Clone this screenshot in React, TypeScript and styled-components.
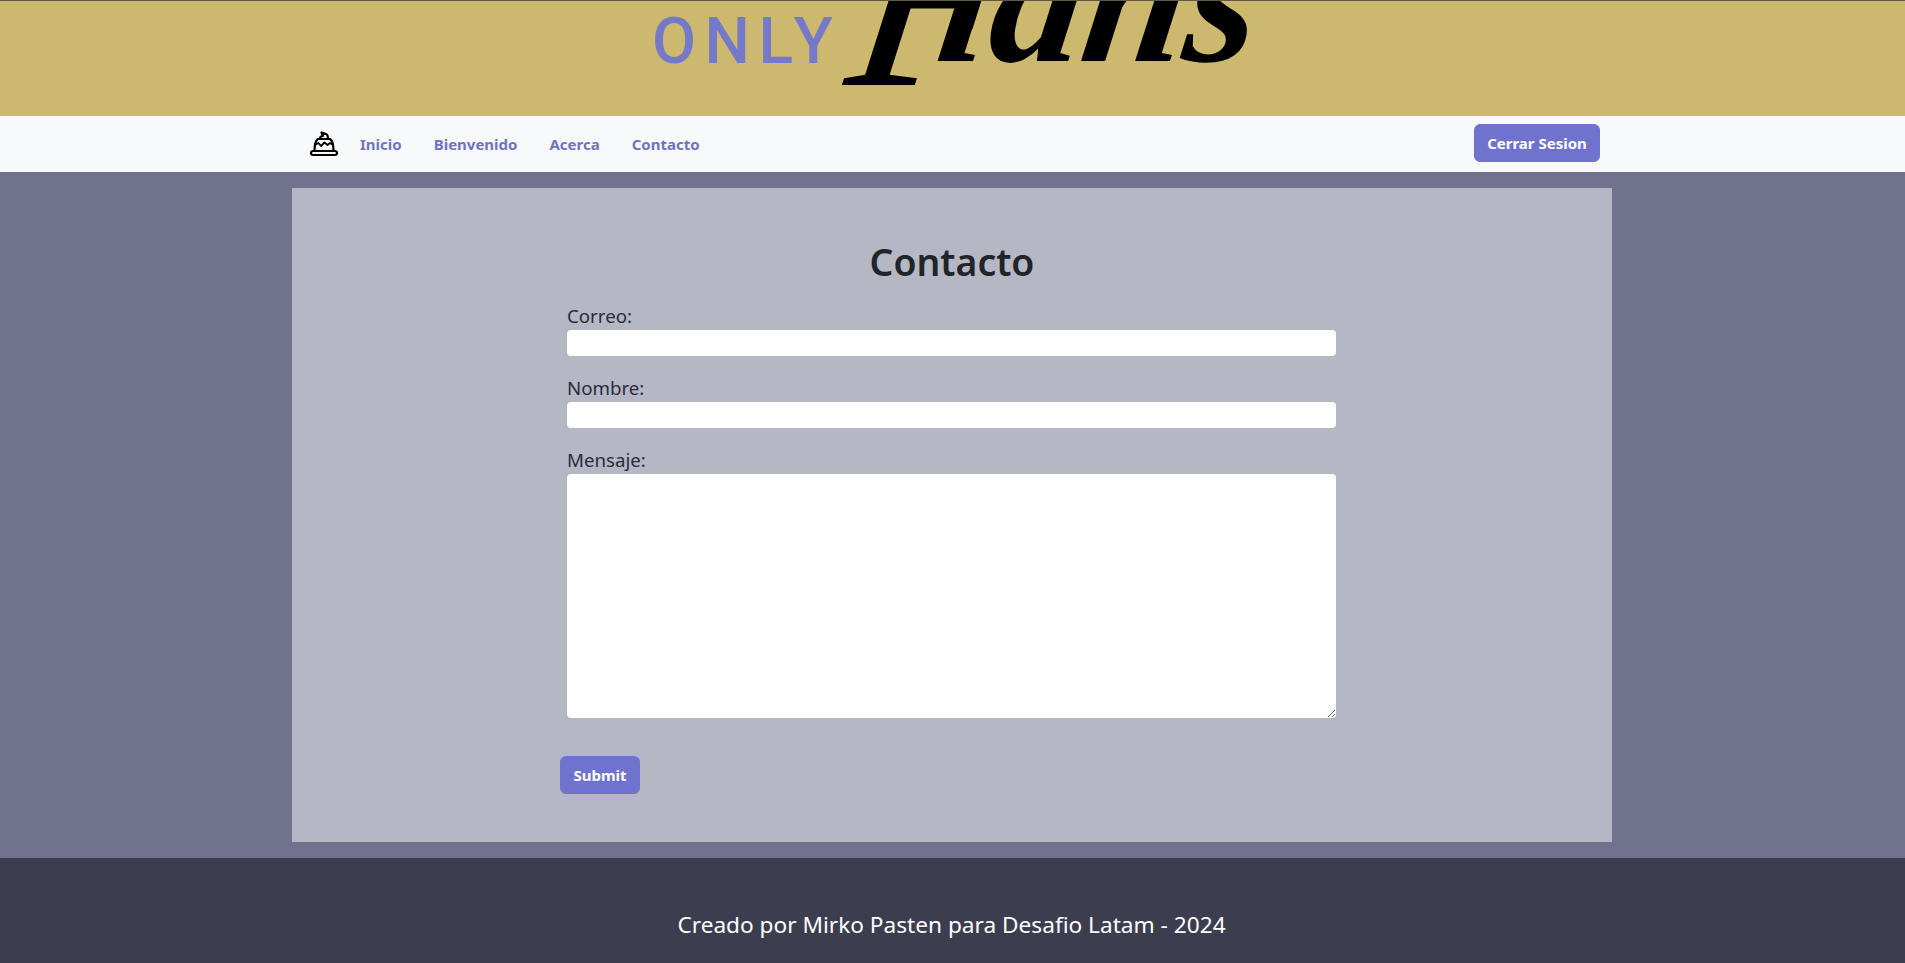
import React from 'react';
import styled, {createGlobalStyle} from "styled-components";

const GlobalStyle = createGlobalStyle`
  html, body {
    margin: 0;
    padding: 0;
    background: #71728e;
    overflow: hidden;
  }
  * {
    box-sizing: border-box;
  }
  body {
    font-family: "Noto Sans", "Open Sans", sans-serif;
    color: #212529;
  }
`

const Banner = styled.header`
  height: 116px;
  background: #cdb96e;
  border-top: 1px solid #5f5a45;
  overflow: hidden;
  display: flex;
  justify-content: center;
  padding-right: 1px;
`

const LogoRow = styled.div`
  width: 620px;
  height: 64px;
  padding-left: 10px;
  display: flex;
  align-items: flex-end;
`

const LogoOnly = styled.span`
  font-family: Roboto, sans-serif;
  font-size: 64px;
  font-weight: 500;
  line-height: 46px;
  height: 46px;
  letter-spacing: 8.5px;
  color: #7579c9;
`

const LogoScript = styled.span`
  font-family: "Liberation Serif", serif;
  font-style: italic;
  font-weight: 700;
  font-size: 185px;
  line-height: 64px;
  height: 64px;
  color: #000;
  white-space: nowrap;
  transform: translate(18px, -60px) skewX(-8deg);
`

const ScriptInitial = styled.span`
  display: inline-block;
  font-size: 260px;
  font-weight: 400;
  line-height: 64px;
  margin-right: -72px;
  transform: translateY(24px);
`

const NavBar = styled.nav`
  height: 56px;
  background: #f8f9fa;
  display: flex;
  justify-content: center;
  padding-right: 1px;
`

const NavContainer = styled.div`
  width: 1320px;
  padding: 0 12px 2px 18px;
  display: flex;
  align-items: center;
`

const CakeIcon = styled.svg`
  width: 28px;
  height: 26px;
  margin: 2px 22px 0 0;
  flex-shrink: 0;
`

const NavLinks = styled.div`
  display: flex;
  flex: 1;
  gap: 32px;
  margin-top: 1px;
`

const NavLink = styled.a`
  font-size: 15px;
  font-weight: 700;
  color: #6f73c2;
  text-decoration: none;
`

const Button = styled.button`
  height: 38px;
  width: ${props => props.$width}px;
  padding: 0;
  border: 1px solid #6f73cd;
  border-radius: 6px;
  background: #6f73cd;
  color: #fff;
  font-family: inherit;
  font-size: 15px;
  font-weight: 700;
`

const Main = styled.main`
  height: 686px;
  padding: 16px 1px 16px 0;
  display: flex;
  justify-content: center;
`

const Panel = styled.section`
  width: 1320px;
  height: 654px;
  background: #b5b7c5;
  padding-top: 50px;
`

const Title = styled.h1`
  margin: 0;
  height: 48px;
  font-size: 37.4px;
  line-height: 48px;
  font-weight: 600;
  text-align: center;
`

const Form = styled.form`
  width: 784px;
  margin: 14px auto 0;
`

const Field = styled.div`
  padding: 0 8px 0 7px;
  margin-bottom: 16px;
`

const Label = styled.label`
  display: block;
  height: 30px;
  padding-top: 1px;
  font-size: 18.7px;
  line-height: 30px;
  color: #2b2c3a;
`

const Input = styled.input`
  display: block;
  width: 100%;
  height: 26px;
  border: none;
  border-radius: 4px;
  background: #fff;
`

const TextArea = styled.textarea`
  display: block;
  width: 100%;
  height: 244px;
  border: none;
  border-radius: 4px;
  background: #fff;
`

const SubmitRow = styled.div`
  padding-top: 22px;
`

const Footer = styled.footer`
  height: 105px;
  background: #3d3d50;
  padding: 49px 2px 0 0;
  text-align: center;
  color: #fff;
  font-size: 22.65px;
  line-height: 36px;
`

function App() {
    return (
        <>
            <GlobalStyle/>
            <Banner>
                <LogoRow>
                    <LogoOnly>ONLY</LogoOnly>
                    <LogoScript><ScriptInitial>F</ScriptInitial>lans</LogoScript>
                </LogoRow>
            </Banner>
            <NavBar>
                <NavContainer>
                    <CakeIcon viewBox="0 0 28 26" fill="none" stroke="#000" strokeWidth="2.2" strokeLinejoin="round" strokeLinecap="round">
                        <rect x="1" y="20" width="26" height="4" rx="2"/>
                        <path d="M4.5 20 C4.5 14 5 10 8 8 H20 C23 10 23.5 14 23.5 20"/>
                        <path d="M5 14 L8.5 12 L11 15 L14.5 11.5 L17.5 14 L20 12 L23 14" strokeWidth="1.8"/>
                        <path d="M10 8 C10 5 12 5 13 5 L11.5 1.5 L16 3 C17.5 3.5 18 6 18 8"/>
                    </CakeIcon>
                    <NavLinks>
                        <NavLink href="#">Inicio</NavLink>
                        <NavLink href="#">Bienvenido</NavLink>
                        <NavLink href="#">Acerca</NavLink>
                        <NavLink href="#">Contacto</NavLink>
                    </NavLinks>
                    <Button $width={126}>Cerrar Sesion</Button>
                </NavContainer>
            </NavBar>
            <Main>
                <Panel>
                    <Title>Contacto</Title>
                    <Form>
                        <Field>
                            <Label>Correo:</Label>
                            <Input type="email"/>
                        </Field>
                        <Field>
                            <Label>Nombre:</Label>
                            <Input type="text"/>
                        </Field>
                        <Field>
                            <Label>Mensaje:</Label>
                            <TextArea/>
                        </Field>
                        <SubmitRow>
                            <Button $width={80} type="button">Submit</Button>
                        </SubmitRow>
                    </Form>
                </Panel>
            </Main>
            <Footer>Creado por Mirko Pasten para Desafio Latam - 2024</Footer>
        </>
    );
}

export default App;
